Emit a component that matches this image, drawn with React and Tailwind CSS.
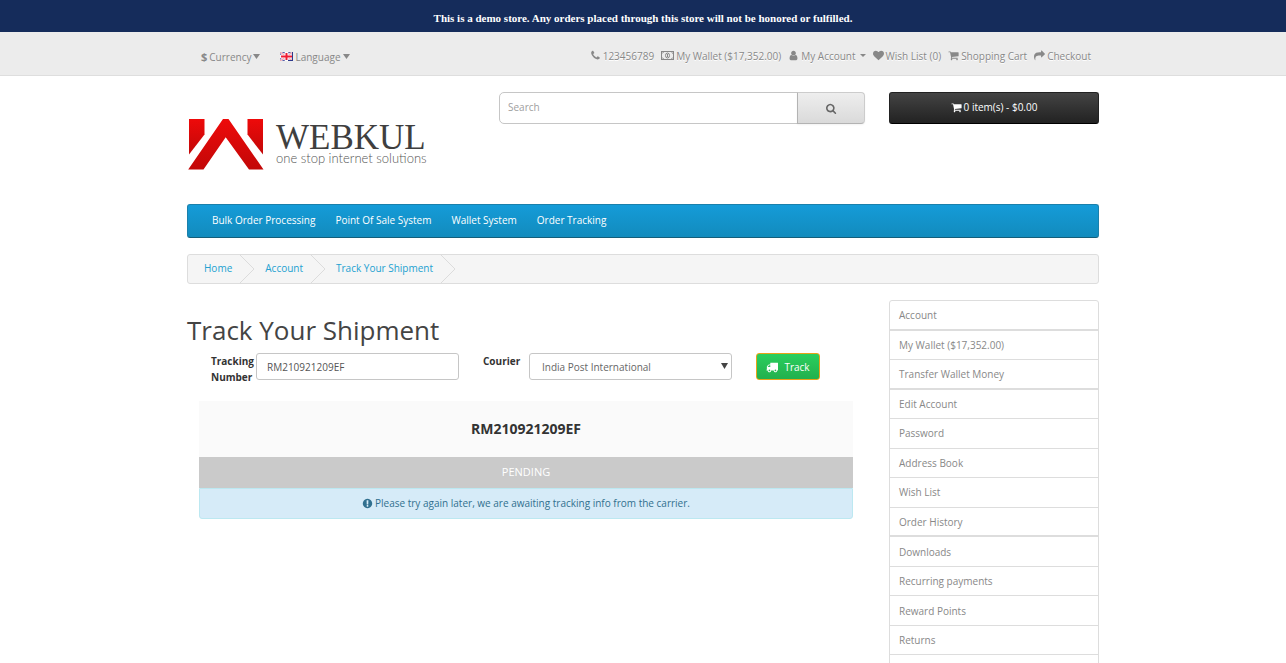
import React from "react";

const paths = {
  phone:
    "M1600 1240q0 27-10 70.5t-21 68.5q-21 50-122 106-94 51-186 51-27 0-53-3.5t-57.5-12.5-47-14.5-55.5-20.5-49-18q-98-35-175-83-127-79-264-216t-216-264q-48-77-83-175-3-9-18-49t-20.5-55.5-14.5-47-12.5-57.5-3.5-53q0-92 51-186 56-101 106-122 25-11 68.5-21t70.5-10q14 0 21 3 18 6 53 76 11 19 30 54t35 63.5 31 53.5q3 4 17.5 25t21.5 35.5 7 28.5q0 20-28.5 50t-62 55-62 53-28.5 46q0 9 5 22.5t8.5 20.5 14 24 11.5 19q76 137 174 235t235 174q2 1 19 11.5t24 14 20.5 8.5 22.5 5q18 0 46-28.5t53-62 55-62 50-28.5q14 0 28.5 7t35.5 21.5 25 17.5q25 15 53.5 31t63.5 35 54 30q70 35 76 53 3 7 3 21z",
  user:
    "M1536 1399q0 109-62.5 187t-150.5 78h-854q-88 0-150.5-78t-62.5-187q0-85 8.5-160.5t31.5-152 58.5-131 94-89 134.5-34.5q131 128 313 128t313-128q76 0 134.5 34.5t94 89 58.5 131 31.5 152 8.5 160.5zm-256-887q0 159-112.5 271.5t-271.5 112.5-271.5-112.5-112.5-271.5 112.5-271.5 271.5-112.5 271.5 112.5 112.5 271.5z",
  heart:
    "M896 1664q-26 0-44-18l-624-602q-10-8-27.5-26t-55.5-65.5-68-97.5-53.5-121-23.5-138q0-220 127-344t351-124q62 0 126.5 21.5t120 58 95.5 68.5 76 68q36-36 76-68t95.5-68.5 120-58 126.5-21.5q224 0 351 124t127 344q0 221-229 450l-623 600q-18 18-44 18z",
  cart:
    "M704 1536q0 52-38 90t-90 38-90-38-38-90 38-90 90-38 90 38 38 90zm896 0q0 52-38 90t-90 38-90-38-38-90 38-90 90-38 90 38 38 90zm128-1088v512q0 24-16.5 42.5t-40.5 21.5l-1044 122q13 60 13 70 0 16-24 64h920q26 0 45 19t19 45-19 45-45 19h-1024q-26 0-45-19t-19-45q0-11 8-31.5t16-36 21.5-40 15.5-29.5l-177-823h-204q-26 0-45-19t-19-45 19-45 45-19h256q16 0 28.5 6.5t19.5 15.5 13 24.5 8 26 5.5 29.5 4.5 26h1201q26 0 45 19t19 45z",
  share:
    "M1792 640q0 26-19 45l-512 512q-19 19-45 19t-45-19-19-45v-256h-224q-98 0-175.5 6t-154 21.5-133 42.5-105.5 69.5-80 101-48.5 138.5-17.5 181q0 55 5 123 0 6 2.5 23.5t2.5 26.5q0 15-8.5 25t-23.5 10q-16 0-28-17-7-9-13-22t-13.5-30-10.5-24q-127-285-127-451 0-199 53-333 162-403 875-403h224v-256q0-26 19-45t45-19 45 19l512 512q19 19 19 45z",
  search:
    "M1152 832q0-185-131.5-316.5t-316.5-131.5-316.5 131.5-131.5 316.5 131.5 316.5 316.5 131.5 316.5-131.5 131.5-316.5zm512 832q0 52-38 90t-90 38q-54 0-90-38l-343-342q-179 124-399 124-143 0-273.5-55.5t-225-150-150-225-55.5-273.5 55.5-273.5 150-225 225-150 273.5-55.5 273.5 55.5 225 150 150 225 55.5 273.5q0 220-124 399l343 343q37 37 37 90z",
  truck:
    "M640 1408q0-52-38-90t-90-38-90 38-38 90 38 90 90 38 90-38 38-90zm-384-512h384v-256h-158q-13 0-22 9l-195 195q-9 9-9 22v30zm1280 512q0-52-38-90t-90-38-90 38-38 90 38 90 90 38 90-38 38-90zm256-1088v1024q0 15-4 26.5t-13.5 18.5-16.5 11.5-23.5 6-22.5 2-25.5 0-22.5-.5q0 106-75 181t-181 75-181-75-75-181h-384q0 106-75 181t-181 75-181-75-75-181h-64q-3 0-22.5.5t-25.5 0-22.5-2-23.5-6-16.5-11.5-13.5-18.5-4-26.5q0-26 19-45t45-19v-320q0-8-.5-35t0-38 2.5-34.5 6.5-37 14-30.5 22.5-30l198-198q19-19 50.5-32t58.5-13h160v-192q0-26 19-45t45-19h1024q26 0 45 19t19 45z",
  alert:
    "M896 128q209 0 385.5 103t279.5 279.5 103 385.5-103 385.5-279.5 279.5-385.5 103-385.5-103-279.5-279.5-103-385.5 103-385.5 279.5-279.5 385.5-103zm128 1247v-190q0-14-9-23.5t-22-9.5h-192q-13 0-23 10t-10 23v190q0 13 10 23t23 10h192q13 0 22-9.5t9-23.5zm-2-344l18-621q0-12-10-18-10-8-24-8h-220q-14 0-24 8-10 6-10 18l17 621q0 10 10 17.5t24 7.5h185q14 0 23.5-7.5t10.5-17.5z",
};

function Icon({ name, className = "size-[11px]" }) {
  return (
    <svg viewBox="0 0 1792 1792" fill="currentColor" aria-hidden="true" className={`shrink-0 ${className}`}>
      <path d={paths[name]} />
    </svg>
  );
}

function MoneyIcon() {
  return (
    <svg viewBox="0 0 13 9" fill="none" stroke="currentColor" aria-hidden="true" className="h-[9px] w-[13px] shrink-0">
      <rect x="0.5" y="0.5" width="12" height="8" strokeWidth="1" />
      <ellipse cx="6.5" cy="4.5" rx="2" ry="2.5" strokeWidth="1" />
      <path d="M6.5 3v3M1 2.6L2.6 1M12 2.6L10.4 1M1 6.4L2.6 8M12 6.4L10.4 8" strokeWidth="1" />
    </svg>
  );
}

function Caret({ className = "h-[5px] w-[7px]" }) {
  return (
    <svg viewBox="0 0 8 5" preserveAspectRatio="none" fill="currentColor" aria-hidden="true" className={`shrink-0 ${className}`}>
      <path d="M0 0h8L4 5z" />
    </svg>
  );
}

function Flag() {
  return (
    <svg viewBox="0 0 26 18" aria-hidden="true" className="h-[9px] w-[13px] shrink-0">
      <path fill="#5560a8" d="M0 0h26v18H0z" />
      <path fill="#b9bfdf" d="M2 2h22v14H2z" />
      <path stroke="#f4dfe6" strokeWidth="4" d="M0 0l26 18M26 0L0 18" />
      <path stroke="#f0808c" strokeWidth="1.5" d="M0 0l26 18M26 0L0 18" />
      <path stroke="#fff" strokeWidth="7" d="M13 0v18M0 9h26" />
      <path stroke="#ee1c34" strokeWidth="4" d="M13 2v14M2 9h22" />
      <path stroke="#2e3a8c" strokeWidth="2" d="M25 0v18M16 17h10" />
    </svg>
  );
}

function Logo() {
  return (
    <svg viewBox="0 0 240 54" role="img" aria-label="Webkul" className="h-[54px] w-[240px]">
      <defs>
        <linearGradient id="logoRed" x1="0" y1="0" x2="0" y2="1">
          <stop offset="0" stopColor="#ee0a0a" />
          <stop offset="1" stopColor="#c20808" />
        </linearGradient>
      </defs>
      <g fill="url(#logoRed)">
        <path d="M2 2h15.500v15.500L2 37.500z" />
        <path d="M60.500 2h15.500v35.500L60.500 17.500z" />
        <path d="M36 2h5.500L76.500 52.500H62L38.700 20.300L16.500 52.500H1.200z" />
      </g>
      <text x="89" y="32" fontSize="35" fill="#3f3f3f" fontFamily="'Liberation Serif', serif">WEBKUL</text>
      <text x="89" y="46" fontSize="13" fill="#555" fontWeight="300" fontFamily="Lato, sans-serif">one stop internet solutions</text>
    </svg>
  );
}

const topLinks = [
  { label: "123456789", icon: "phone" },
  { label: "My Wallet ($17,352.00)", icon: "money" },
  { label: "My Account", icon: "user", caret: true },
  { label: "Wish List (0)", icon: "heart" },
  { label: "Shopping Cart", icon: "cart" },
  { label: "Checkout", icon: "share" },
];

const menu = ["Bulk Order Processing", "Point Of Sale System", "Wallet System", "Order Tracking"];
const crumbs = ["Home", "Account", "Track Your Shipment"];

const accountLinks = [
  { label: "Account", strong: true },
  { label: "My Wallet ($17,352.00)" },
  { label: "Transfer Wallet Money", strong: true },
  { label: "Edit Account" },
  { label: "Password" },
  { label: "Address Book" },
  { label: "Wish List" },
  { label: "Order History", strong: true },
  { label: "Downloads" },
  { label: "Recurring payments" },
  { label: "Reward Points" },
  { label: "Returns" },
  { label: "Transactions" },
];

function TopBar() {
  return (
    <nav className="border-b border-[#dedede] bg-[#ececec] text-[#888] [text-shadow:0_1px_0_#fff]">
      <div className="mx-auto flex h-[43px] max-w-[912px] items-center justify-between pt-1 pr-2 pl-[14px]">
        <div className="flex items-center gap-5 pt-[2px]">
          <button type="button" className="flex items-center gap-[2px]">
            <strong className="text-[11px]">$</strong>
            <span>Currency</span>
            <Caret />
          </button>
          <button type="button" className="flex items-center gap-[2px]">
            <Flag />
            <span>Language</span>
            <Caret />
          </button>
        </div>
        <ul className="flex items-center gap-[7px]">
          {topLinks.map((l) => (
            <li key={l.label}>
              <a href="#" className="flex items-center gap-[2px]">
                {l.icon === "money" ? <MoneyIcon /> : <Icon name={l.icon} />}
                <span>{l.label}</span>
                {l.caret && <Caret className="ml-[2px] h-[3px] w-[6px]" />}
              </a>
            </li>
          ))}
        </ul>
      </div>
    </nav>
  );
}

function Header() {
  return (
    <header className="mx-auto grid max-w-[912px] grid-cols-12 gap-6 pt-4">
      <a href="#" className="col-span-4 h-28 pt-[25px]">
        <Logo />
      </a>
      <form className="col-span-5 flex h-8">
        <input
          type="text"
          placeholder="Search"
          aria-label="Search"
          className="min-w-0 flex-1 rounded-l-[5px] border border-[#c6c6c6] bg-white px-2 pb-[2px] placeholder:text-[#a0a0a0]"
        />
        <button
          type="button"
          aria-label="Search"
          className="-ml-px flex w-[68px] items-center justify-center rounded-r-[4px] border border-[#ccc] border-b-[#b3b3b3] border-l-[#b3b3b3] bg-linear-to-b from-[#eeeeee] to-[#dadada] text-[#666] shadow-[0_1px_2px_rgba(0,0,0,0.05)]"
        >
          <Icon name="search" />
        </button>
      </form>
      <button
        type="button"
        className="col-span-3 flex h-8 items-center justify-center gap-[2px] rounded-[3px] border border-[#222] border-b-black bg-linear-to-b from-[#444] to-[#222] pb-[2px] text-white"
      >
        <Icon name="cart" />
        <span>0 item(s) - $0.00</span>
      </button>
    </header>
  );
}

function Breadcrumb() {
  return (
    <ol className="mt-4 flex h-[30px] overflow-hidden rounded-[3px] border border-[#ddd] bg-[#f5f5f5] pl-4 text-[#23a1d1]">
      {crumbs.map((c) => (
        <li key={c} className="flex items-center">
          <a href="#" className="pb-[2px]">{c}</a>
          <svg viewBox="0 0 16 28" fill="none" stroke="#dcdcdc" aria-hidden="true" className="mr-[10px] ml-[7px] h-7 w-4">
            <path d="M1 0l14 14L1 28" />
          </svg>
        </li>
      ))}
    </ol>
  );
}

function TrackForm() {
  return (
    <form className="mt-2 flex items-start pl-6">
      <label htmlFor="tracking" className="w-[45px] leading-4 font-bold text-[#333]">
        Tracking Number
      </label>
      <input
        id="tracking"
        type="text"
        defaultValue="RM210921209EF"
        className="h-[27px] w-[203px] rounded-[3px] border border-[#c6c6c6] px-[10px] text-[#555]"
      />
      <label htmlFor="courier" className="ml-6 w-[46px] leading-4 font-bold text-[#333]">
        Courier
      </label>
      <div className="relative w-[203px]">
        <select id="courier" className="h-[27px] w-full appearance-none rounded-[3px] border border-[#c6c6c6] bg-white px-3 text-[#666]">
          <option>India Post International</option>
        </select>
        <Caret className="pointer-events-none absolute top-[10px] right-1 h-[6px] w-[7px] text-[#444]" />
      </div>
      <button
        type="button"
        className="ml-6 flex h-[27px] w-16 items-center justify-center gap-[6px] rounded-[3px] border border-[#e8a317] bg-linear-to-b from-[#2bcf5e] to-[#22b04d] text-white"
      >
        <Icon name="truck" className="size-3" />
        <span>Track</span>
      </button>
    </form>
  );
}

export default function App() {
  return (
    <div className="bg-white font-['Open_Sans',sans-serif] text-[10px] leading-4 text-[#666]">
      <p className="bg-[#152c5b] pt-[10px] pb-[6px] text-center font-['Liberation_Serif',serif] text-[11px] leading-4 font-bold text-white">
        This is a demo store. Any orders placed through this store will not be honored or fulfilled.
      </p>
      <TopBar />
      <Header />
      <div className="mx-auto max-w-[912px]">
        <nav className="flex h-[34px] items-center gap-5 rounded-[3px] border border-[#1b80ab] border-b-[#145e7a] bg-linear-to-b from-[#159bd8] to-[#128bbd] px-6 pb-[2px] text-white">
          {menu.map((m) => (
            <a key={m} href="#">{m}</a>
          ))}
        </nav>
        <Breadcrumb />
        <div className="mt-4 grid grid-cols-12 gap-6">
          <main className="col-span-9 pt-[15px]">
            <h1 className="text-[26px] leading-[30px] text-[#444]">Track Your Shipment</h1>
            <TrackForm />
            <section className="mx-3 mt-4 text-center">
              <h2 className="bg-[#fafafa] py-5 text-[14px] leading-4 font-bold text-[#333]">RM210921209EF</h2>
              <p className="bg-[#cacaca] pt-[7px] pb-2 text-[11px] leading-4 text-white">PENDING</p>
              <p className="flex items-center justify-center gap-[2px] rounded-b-[3px] border border-[#bce8f1] bg-[#d6ebf8] pt-[6px] pb-[7px] leading-4 text-[#31708f]">
                <Icon name="alert" />
                <span>Please try again later, we are awaiting tracking info from the carrier.</span>
              </p>
            </section>
          </main>
          <aside className="col-span-3">
            <ul className="grid h-[386px] auto-rows-fr rounded-[3px] border border-[#ddd] text-[#888]">
              {accountLinks.map((l) => (
                <li key={l.label} className={`flex items-center border-[#ddd] px-[9px] ${l.strong ? "border-b-2" : "border-b"}`}>
                  <a href="#">{l.label}</a>
                </li>
              ))}
            </ul>
          </aside>
        </div>
      </div>
    </div>
  );
}
